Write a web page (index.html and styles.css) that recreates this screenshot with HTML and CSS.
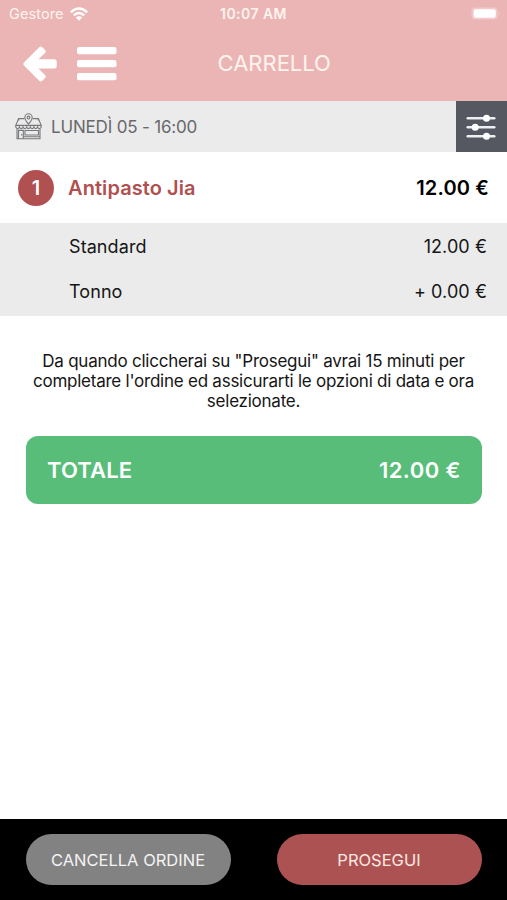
FILE: index.html
```html
<!DOCTYPE html>
<html lang="it">
<head>
<meta charset="utf-8">
<title>Carrello</title>
<link rel="stylesheet" href="styles.css">
</head>
<body>
<div class="app">
  <header class="header">
    <div class="status">
      <div class="carrier"><span>Gestore</span>
        <svg width="18" height="14" viewBox="0 0 18 14" fill="none" stroke="#fff" stroke-width="2.4"><path d="M.9 5.3Q9-2.3 17.1 5.3M3.8 8.3Q9 3.6 14.2 8.3"/><path d="M9 13.7L5.8 10.5Q9 7.9 12.2 10.5Z" fill="#fff" stroke="none"/></svg>
      </div>
      <span class="clock">10:07 AM</span>
      <svg class="battery" width="30" height="14" viewBox="0 0 30 14"><rect x=".5" y=".5" width="26" height="12" rx="3.5" fill="#f1c9ca"/><rect x="2.7" y="2.3" width="22" height="8.5" rx="2" fill="#fff"/><path d="M27.5 4Q29.5 6.5 27.5 9Z" fill="#f1c9ca"/></svg>
    </div>
    <nav class="nav">
      <div class="nav-icons">
        <svg width="34" height="36" viewBox="0 0 34 36"><path d="M1 16.5L16.2 1.3Q17.8-.2 19.4 1.3L22 3.9Q23.5 5.4 22 7L15.5 13.2H31Q33.7 13.2 33.7 15.8V20Q33.7 22.5 31 22.5H15.5L22 29Q23.5 30.5 22 32.1L19.4 34.7Q17.8 36.2 16.2 34.7L1 19.5Q-.4 18 1 16.5Z" fill="#fff"/></svg>
        <svg width="40" height="34" viewBox="0 0 40 34" fill="#fff"><rect width="39.5" height="7.3" rx="2"/><rect y="13" width="39.5" height="7.3" rx="2"/><rect y="26" width="39.5" height="7.3" rx="2"/></svg>
      </div>
      <h1 class="title">CARRELLO</h1>
    </nav>
  </header>
  <section class="slot">
    <svg class="shop" width="27" height="27" viewBox="0 0 27 27" fill="none" stroke="#77787b" stroke-width="1.1">
      <path d="M9.2 5.6H3.6L.8 12.4H26.2L23.4 5.6H17.8M3.7 7.5V5.6M23.3 7.5V5.6"/>
      <path d="M13.5 11C10.5 7.8 9.8 6.2 9.8 4.5A3.7 3.7 0 0 1 17.2 4.5C17.2 6.2 16.5 7.8 13.5 11Z"/><circle cx="13.5" cy="4.5" r="1.4"/>
      <path d="M.8 12.4V14.2Q2.6 17 4.4 14.2Q6.2 17 8 14.2Q9.8 17 11.7 14.2Q13.5 17 15.3 14.2Q17.2 17 19 14.2Q20.8 17 22.6 14.2Q24.4 17 26.2 14.2V12.4M4.4 12V14.5M8 12V14.5M11.7 12V14.5M15.3 12V14.5M19 12V14.5M22.6 12V14.5"/>
      <path d="M2 16V25.7H25V16M3.5 25.5V17.4H8.3V25.5M10 17.5H23.5V22H10ZM8.5 23.7H25M6.7 21V22.5"/>
    </svg>
    <span class="slot-time">LUNEDÌ 05 - 16:00</span>
    <div class="filter">
      <svg width="30" height="26" viewBox="0 0 30 26" fill="#fff"><g fill="#edf0f3"><rect x=".5" y="3.1" width="29" height="2.4" rx="1.2"/><rect x=".5" y="12" width="29" height="2.4" rx="1.2"/><rect x=".5" y="21" width="29" height="2.4" rx="1.2"/></g><circle cx="20.5" cy="4.3" r="3.5"/><circle cx="9.2" cy="13.2" r="3.5"/><circle cx="20.5" cy="22.2" r="3.5"/></svg>
    </div>
  </section>
  <main class="cart">
    <div class="item"><span class="qty">1</span><span class="item-name">Antipasto Jia</span><span class="item-price">12.00 €</span></div>
    <div class="options">
      <div class="option"><span>Standard</span><span>12.00 €</span></div>
      <div class="option"><span>Tonno</span><span>+ 0.00 €</span></div>
    </div>
    <p class="notice">Da quando cliccherai su "Prosegui" avrai 15 minuti per<br>completare l'ordine ed assicurarti le opzioni di data e ora<br>selezionate.</p>
    <div class="total"><span class="total-label">TOTALE</span><span class="total-price">12.00 €</span></div>
  </main>
  <footer class="footer"><button class="button cancel">CANCELLA ORDINE</button><button class="button proceed">PROSEGUI</button></footer>
</div>
</body>
</html>
```
FILE: styles.css
```css
* { box-sizing: border-box; }
body { margin: 0; font-family: Inter, "Liberation Sans", sans-serif; color: #151515; background: #fff; }
svg { display: block; flex: none; }
.app { width: 507px; height: 900px; display: flex; flex-direction: column; overflow: hidden; white-space: nowrap; }
.header { height: 101px; flex: none; background: #ebb5b6; color: #fff4ed; }
.status { height: 27px; display: grid; grid-template-columns: 1fr auto 1fr; align-items: center; padding: 0 9px; }
.carrier { display: flex; align-items: center; gap: 6px; font-size: 14.5px; letter-spacing: .1px; }
.clock { font-size: 14px; font-weight: 600; letter-spacing: .45px; }
.battery { justify-self: end; margin-right: -3px; }
.nav { height: 74px; display: flex; align-items: center; padding: 0 0 2px 22.5px; }
.nav-icons { display: flex; align-items: center; gap: 20px; padding-top: 1px; }
.title { margin: 0 0 0 101px; font-size: 22px; font-weight: 400; }
.slot { height: 51px; flex: none; display: flex; align-items: center; background: #ebebeb; color: #67686b; padding-left: 15px; }
.slot-time { margin-left: 9px; font-size: 17px; letter-spacing: -.18px; }
.filter { width: 51px; height: 51px; margin-left: auto; background: #555761; display: flex; align-items: center; justify-content: center; padding-right: 1px; }
.cart { flex: 1; display: flex; flex-direction: column; }
.item { height: 71px; display: flex; align-items: center; padding: 0 18px; font-size: 20px; font-weight: 600; }
.qty { width: 36px; height: 36px; border-radius: 50%; background: #b05050; color: #fff; display: flex; align-items: center; justify-content: center; }
.item-name { margin-left: 14px; color: #b05050; letter-spacing: .08px; }
.item-price { margin-left: auto; color: #000; letter-spacing: .15px; }
.options { background: #ebebeb; padding: 1px 20px 0 69px; height: 93px; }
.option { height: 45px; display: flex; justify-content: space-between; align-items: center; font-size: 18px; letter-spacing: .08px; }
.notice { margin: 35px 0 25px; text-align: center; font-size: 17px; line-height: 20px; letter-spacing: -.24px; }
.total { height: 68px; margin: 0 25px 0 26px; padding: 0 21px; border-radius: 12px; background: #57bd79; color: #fff; display: flex; align-items: center; justify-content: space-between; font-size: 22px; font-weight: 600; }
.total-label { letter-spacing: .15px; }
.total-price { letter-spacing: .45px; }
.footer { height: 81px; flex: none; background: #000; display: flex; justify-content: space-between; padding: 15px 25px 0 26px; }
.button { width: 205px; height: 51px; border: 0; border-radius: 26px; padding: 0 1px 0 0; font: 400 16.5px Inter, "Liberation Sans", sans-serif; }
.cancel { background: #828282; color: #f4f4f4; }
.proceed { background: #ad5252; color: #ffe9e2; }
```
